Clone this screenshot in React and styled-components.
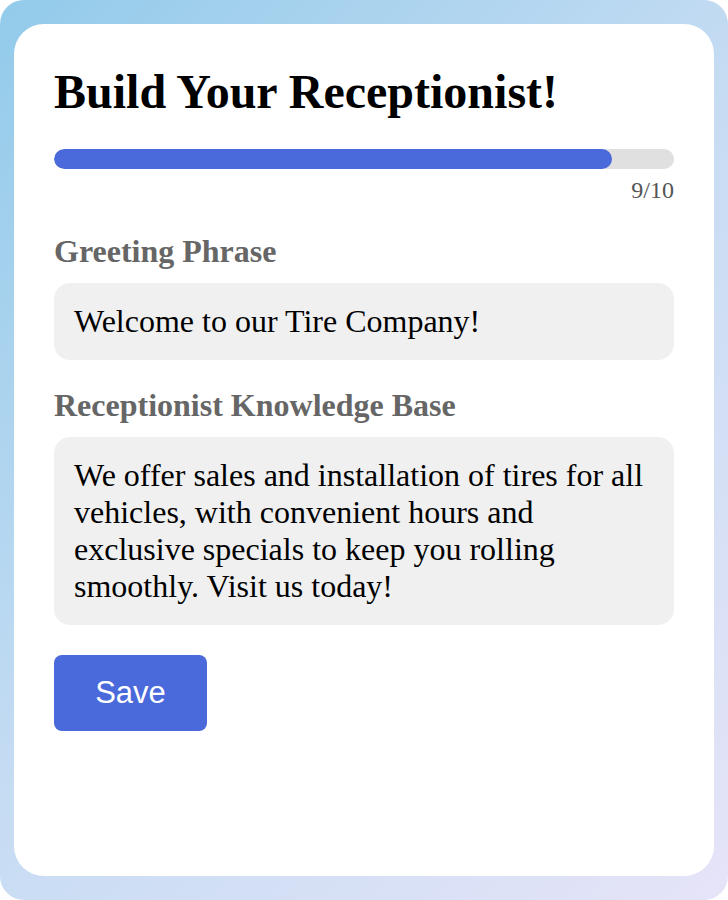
import React from "react";
import styled, { createGlobalStyle } from "styled-components";

const GlobalStyle = createGlobalStyle`
  html, body {
    margin: 0;
    padding: 0;
  }
  body {
    font-family: "Liberation Serif", "Times New Roman", serif;
  }
  * {
    box-sizing: border-box;
  }
`;

const Backdrop = styled.div`
  height: 100vh;
  padding: 24px 0;
  display: flex;
  justify-content: center;
  border-radius: 24px;
  background: linear-gradient(135deg, #92cbea 0%, #c6dcf3 50%, #e6e4f8 100%);
`;

const Card = styled.div`
  width: 700px;
  background: #fff;
  border-radius: 30px;
  padding: 40px;
  display: flex;
  flex-direction: column;
`;

const Title = styled.h1`
  margin: 0 0 30px;
  font-size: 48px;
  font-weight: 700;
  color: #000;
`;

const Track = styled.div`
  height: 20px;
  flex-shrink: 0;
  border-radius: 10px;
  background: #e0e0e0;
  overflow: hidden;
`;

const Fill = styled.div`
  height: 100%;
  border-radius: 10px;
  background: #4a69db;
`;

const Counter = styled.div`
  margin-top: 8px;
  text-align: right;
  font-size: 24px;
  color: #555;
`;

const Field = styled.div`
  display: flex;
  flex-direction: column;
  margin-top: ${(p) => p.$top}px;
`;

const Label = styled.label`
  font-size: 32px;
  font-weight: 700;
  color: #666;
  margin-bottom: 13px;
`;

const Box = styled.div`
  background: #f0f0f0;
  border-radius: 16px;
  padding: 20px;
  font-size: 32px;
  line-height: 37px;
  color: #000;
`;

const SaveButton = styled.button`
  align-self: flex-start;
  margin-top: 30px;
  width: 153px;
  height: 76px;
  border: none;
  border-radius: 8px;
  background: #4a69db;
  color: #fff;
  font-family: "Liberation Sans", Arial, sans-serif;
  font-size: 31px;
  cursor: pointer;
`;

export default function App() {
  const step = 9;
  const total = 10;
  return (
    <>
      <GlobalStyle />
      <Backdrop>
        <Card>
          <Title>Build Your Receptionist!</Title>
          <Track>
            <Fill style={{ width: `${(step / total) * 100}%` }} />
          </Track>
          <Counter>
            {step}/{total}
          </Counter>
          <Field $top={29}>
            <Label>Greeting Phrase</Label>
            <Box>Welcome to our Tire Company!</Box>
          </Field>
          <Field $top={27}>
            <Label>Receptionist Knowledge Base</Label>
            <Box>
              We offer sales and installation of tires for all vehicles, with
              convenient hours and exclusive specials to keep you rolling
              smoothly. Visit us today!
            </Box>
          </Field>
          <SaveButton>Save</SaveButton>
        </Card>
      </Backdrop>
    </>
  );
}
